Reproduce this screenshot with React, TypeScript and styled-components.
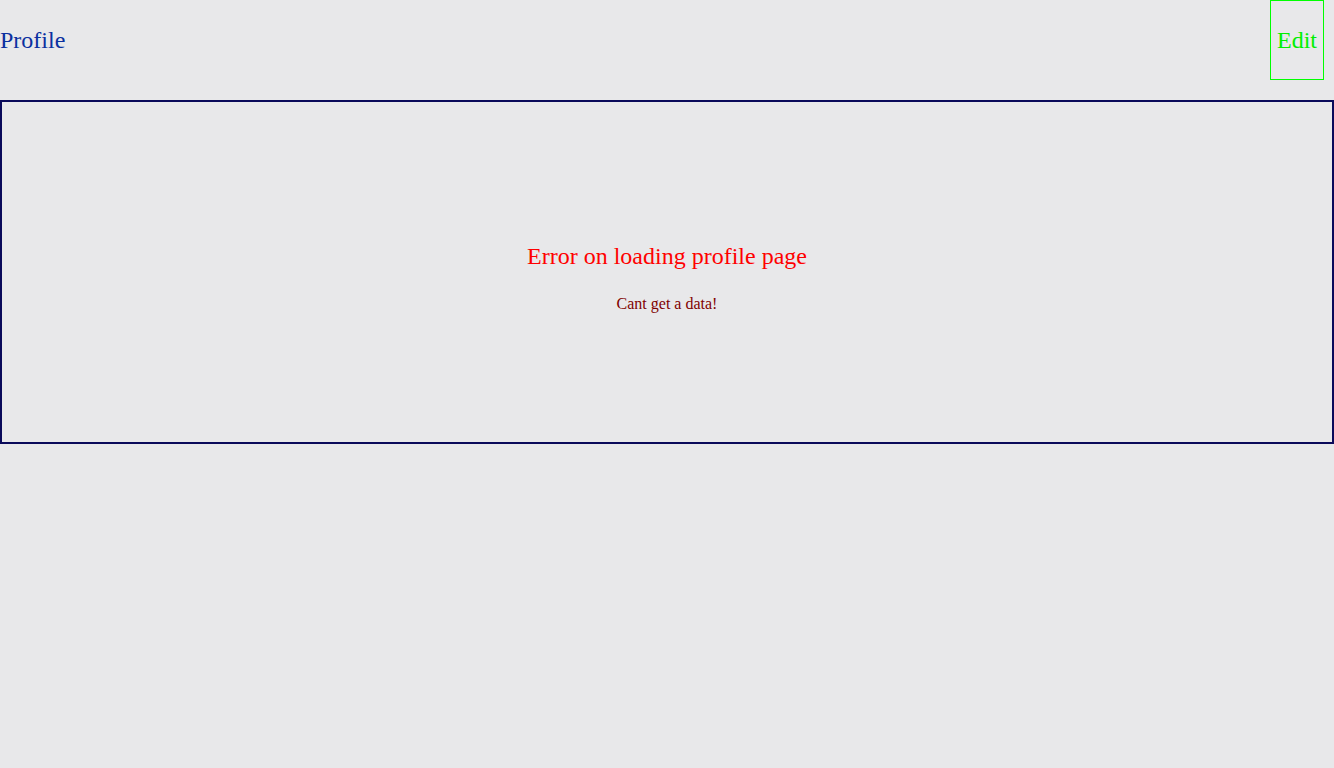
import styled, { createGlobalStyle } from "styled-components";

const GlobalStyle = createGlobalStyle`
  html, body {
    margin: 0;
    padding: 0;
    background-color: #e8e8ea;
    font-family: "Liberation Serif", "Times New Roman", serif;
  }
`;

export const Header = styled.div`
  height: 80px;
  display: flex;
  flex-direction: row;
  justify-content: space-between;
  align-items: center;
  padding-right: 10px;
`;

export const Title = styled.div`
  font-size: 24px;
  color: #0b30a0;
`;

export const EditButton = styled.button`
  height: 80px;
  align-self: flex-start;
  padding: 0 6px;
  border: 1px solid #00ff00;
  background: transparent;
  color: #00ee00;
  font-family: "Liberation Serif", "Times New Roman", serif;
  font-size: 24px;
  cursor: pointer;
`;

export const ErrorPanel = styled.div`
  margin-top: 20px;
  height: 328px;
  padding-top: 12px;
  border: 2px solid #0a0a5a;
  display: flex;
  flex-direction: column;
  align-items: center;
  justify-content: center;
`;

export const ErrorTitle = styled.div`
  font-size: 24px;
  color: #ff0000;
`;

export const ErrorText = styled.div`
  margin-top: 25px;
  font-size: 16px;
  color: #800000;
`;

function App() {
  return (
    <>
      <GlobalStyle />
      <Header>
        <Title>Profile</Title>
        <EditButton>Edit</EditButton>
      </Header>
      <ErrorPanel>
        <ErrorTitle>Error on loading profile page</ErrorTitle>
        <ErrorText>Cant get a data!</ErrorText>
      </ErrorPanel>
    </>
  );
}

export default App;
